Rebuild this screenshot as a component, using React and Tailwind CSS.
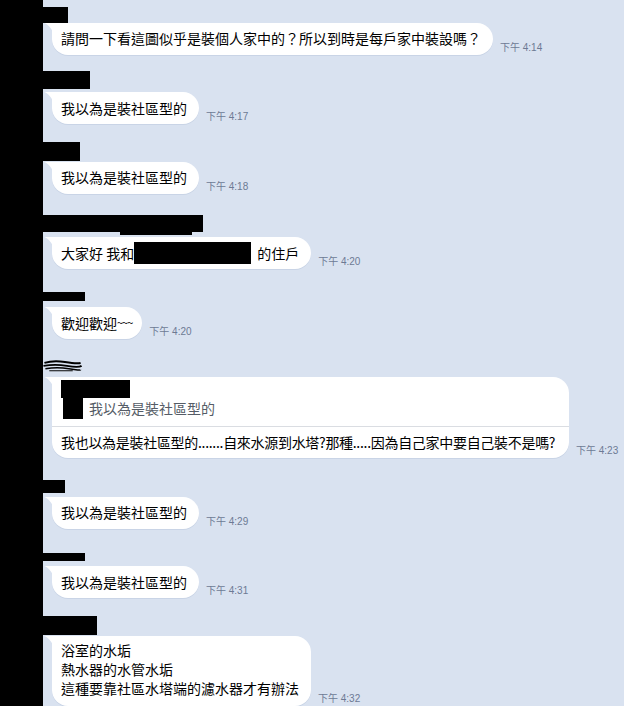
import React from 'react';

const FONT = "font-['Noto_Sans_CJK_TC','Noto_Sans_CJK_SC',sans-serif]";

function Tail() {
  return (
    <svg className="absolute left-[-8px] top-0" width="9" height="10" viewBox="0 0 9 10">
      <path d="M9 0 H0.5 Q5 1.5 9 9 Z" fill="#ffffff" />
    </svg>
  );
}

function Time({ t }) {
  return (
    <span className="ml-[7px] mb-[2px] text-[10px] leading-none whitespace-nowrap text-[#6d7a94] font-['Liberation_Sans','Noto_Sans_CJK_TC',sans-serif]">
      下午 {t}
    </span>
  );
}

function Bubble({ children, t, className = '' }) {
  return (
    <div className="flex items-end ml-[9px]">
      <div className={`relative bg-white rounded-[16px] rounded-tl-none shadow-[0_1px_0_#c9d4e6] ${className}`}>
        <Tail />
        {children}
      </div>
      <Time t={t} />
    </div>
  );
}

function Line({ text, t }) {
  return (
    <Bubble t={t} className="h-[32px] flex items-center pl-[9px] pr-[12px] text-[14px] text-black">
      {text}
    </Bubble>
  );
}

function Name({ w, h, mt }) {
  return <div className={`bg-black ${w} ${h} ${mt}`} />;
}

export default function App() {
  return (
    <div className={`w-[624px] h-[706px] overflow-hidden flex bg-[#d9e2f0] ${FONT}`}>
      <div className="w-[43px] bg-black shrink-0" />
      <div className="flex-1 flex flex-col">
        <Name w="w-[25px]" h="h-[16px]" mt="mt-[7px]" />
        <Line t="4:14" text="請問一下看這圖似乎是裝個人家中的？所以到時是每戶家中裝設嗎？" />

        <Name w="w-[47px]" h="h-[19px]" mt="mt-[16px]" />
        <div className="mt-[3px]"><Line t="4:17" text="我以為是裝社區型的" /></div>

        <Name w="w-[37px]" h="h-[19px]" mt="mt-[18px]" />
        <div className="mt-[1px]"><Line t="4:18" text="我以為是裝社區型的" /></div>

        <Name w="w-[160px]" h="h-[18px]" mt="mt-[21px]" />
        <div className="ml-[77px] w-[72px] h-[3px] bg-black" />
        <div className="mt-[2px]">
          <Bubble t="4:20" className="h-[32px] flex items-center pl-[9px] pr-[12px] text-[14px] text-black">
            <span className="whitespace-pre">大家好 我和</span>
            <span className="inline-block w-[117px] h-[22px] bg-black mr-[6px]" />
            <span>的住戶</span>
          </Bubble>
        </div>

        <Name w="w-[42px]" h="h-[9px]" mt="mt-[23px]" />
        <div className="mt-[6px]">
          <Bubble t="4:20" className="h-[32px] flex items-center pl-[9px] pr-[10px] text-[14px] text-black">
            歡迎歡迎<span className="text-[11px] tracking-[-1px] self-start mt-[7px]">~~~</span>
          </Bubble>
        </div>

        <svg className="mt-[21px]" width="40" height="12" viewBox="0 0 40 12">
          <path d="M1 3 Q10 0 22 2 T38 3" stroke="#000" strokeWidth="2" fill="none" />
          <path d="M0 6 Q12 4 24 6 T39 6" stroke="#000" strokeWidth="2" fill="none" />
          <path d="M2 9 Q14 7 26 9 T38 10" stroke="#000" strokeWidth="1.5" fill="none" />
          <path d="M6 11 H30" stroke="#000" strokeWidth="1" fill="none" />
        </svg>
        <div className="mt-[5px]">
          <Bubble t="4:23" className="w-[517px] text-[14px]">
            <div className="pt-[3px] pl-[9px]">
              <div className="w-[69px] h-[18px] bg-black" />
              <div className="flex items-center">
                <div className="ml-[2px] w-[20px] h-[21px] bg-black" />
                <span className="ml-[6px] text-[#555c66]">我以為是裝社區型的</span>
              </div>
            </div>
            <div className="mt-[7px] h-px bg-[#dadde2]" />
            <div className="h-[31px] flex items-center pl-[9px] text-black tracking-[-0.3px] whitespace-nowrap">
              我也以為是裝社區型的.......自來水源到水塔?那種.....因為自己家中要自己裝不是嗎?
            </div>
          </Bubble>
        </div>

        <Name w="w-[22px]" h="h-[13px]" mt="mt-[22px]" />
        <div className="mt-[4px]"><Line t="4:29" text="我以為是裝社區型的" /></div>

        <Name w="w-[42px]" h="h-[9px]" mt="mt-[24px]" />
        <div className="mt-[5px]"><Line t="4:31" text="我以為是裝社區型的" /></div>

        <Name w="w-[54px]" h="h-[19px]" mt="mt-[18px]" />
        <div className="mt-[1px]">
          <Bubble t="4:32" className="pt-[5px] pb-[8px] pl-[9px] pr-[12px] text-[14px] leading-[19px] text-black">
            <div>浴室的水垢</div>
            <div>熱水器的水管水垢</div>
            <div>這種要靠社區水塔端的濾水器才有辦法</div>
          </Bubble>
        </div>
      </div>
    </div>
  );
}
